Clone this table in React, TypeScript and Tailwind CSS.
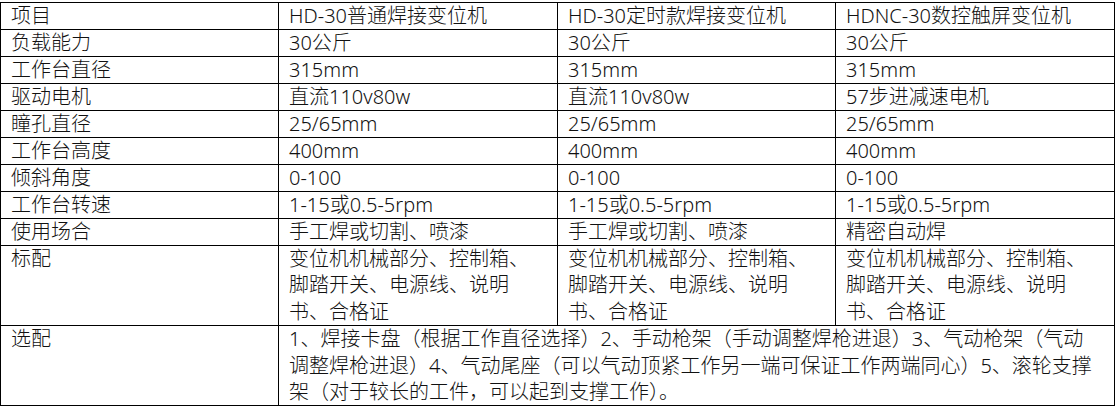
import React from "react";

const rows: string[][] = [
  ["项目", "HD-30普通焊接变位机", "HD-30定时款焊接变位机", "HDNC-30数控触屏变位机"],
  ["负载能力", "30公斤", "30公斤", "30公斤"],
  ["工作台直径", "315mm", "315mm", "315mm"],
  ["驱动电机", "直流110v80w", "直流110v80w", "57步进减速电机"],
  ["瞳孔直径", "25/65mm", "25/65mm", "25/65mm"],
  ["工作台高度", "400mm", "400mm", "400mm"],
  ["倾斜角度", "0-100", "0-100", "0-100"],
  ["工作台转速", "1-15或0.5-5rpm", "1-15或0.5-5rpm", "1-15或0.5-5rpm"],
  ["使用场合", "手工焊或切割、喷漆", "手工焊或切割、喷漆", "精密自动焊"],
];

const standard = ["变位机机械部分、控制箱、", "脚踏开关、电源线、说明", "书、合格证"];
const optional = [
  "1、焊接卡盘（根据工作直径选择）2、手动枪架（手动调整焊枪进退）3、气动枪架（气动",
  "调整焊枪进退）4、气动尾座（可以气动顶紧工作另一端可保证工作两端同心）5、滚轮支撑",
  "架（对于较长的工件，可以起到支撑工作）。",
];

const td = "border border-black pl-[10px] pr-[6px] align-top leading-[26px] whitespace-nowrap";
const tdMulti = "border border-black pl-[10px] pr-[6px] align-top leading-[26.4px] whitespace-nowrap";

function Lines({ lines }: { lines: string[] }) {
  return (
    <>
      {lines.map((l, i) => (
        <div key={i} className="whitespace-nowrap">
          {l}
        </div>
      ))}
    </>
  );
}

export default function App() {
  return (
    <div className="w-[1115px] h-[406px] bg-white pt-[2px] font-['Noto_Sans','Noto_Sans_CJK_SC',sans-serif] font-light text-[20px] text-[#111]">
      <table className="table-fixed border-collapse w-[1114px]">
        <colgroup>
          <col className="w-[278px]" />
          <col className="w-[279px]" />
          <col className="w-[278px]" />
          <col className="w-[279px]" />
        </colgroup>
        <tbody>
          {rows.map((r, i) => (
            <tr key={i}>
              {r.map((c, j) => (
                <td key={j} className={td}>
                  {c}
                </td>
              ))}
            </tr>
          ))}
          <tr>
            <td className={tdMulti}>标配</td>
            <td className={tdMulti}>
              <Lines lines={standard} />
            </td>
            <td className={tdMulti}>
              <Lines lines={standard} />
            </td>
            <td className={tdMulti}>
              <Lines lines={standard} />
            </td>
          </tr>
          <tr>
            <td className={tdMulti}>选配</td>
            <td className={tdMulti} colSpan={3}>
              <Lines lines={optional} />
            </td>
          </tr>
        </tbody>
      </table>
    </div>
  );
}
